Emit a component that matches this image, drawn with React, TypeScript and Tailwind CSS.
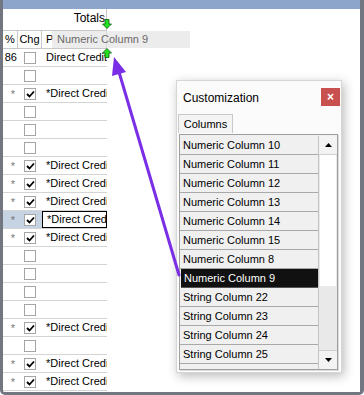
import React from 'react';

type Row = { pct?: string; star?: boolean; checked?: boolean; text?: string; selected?: boolean };

const rows: Row[] = [
  { pct: '86', text: 'Direct Credit' },
  {},
  { star: true, checked: true, text: '*Direct Credit' },
  {},
  {},
  {},
  { star: true, checked: true, text: '*Direct Credit' },
  { star: true, checked: true, text: '*Direct Credit' },
  { star: true, checked: true, text: '*Direct Credit' },
  { star: true, checked: true, text: '*Direct Credit', selected: true },
  { star: true, checked: true, text: '*Direct Credit' },
  {},
  {},
  {},
  {},
  { star: true, checked: true, text: '*Direct Credit' },
  {},
  { star: true, checked: true, text: '*Direct Credit' },
  { star: true, checked: true, text: '*Direct Credit' },
];

const columns = [
  'Numeric Column 10',
  'Numeric Column 11',
  'Numeric Column 12',
  'Numeric Column 13',
  'Numeric Column 14',
  'Numeric Column 15',
  'Numeric Column 8',
  'Numeric Column 9',
  'String Column 22',
  'String Column 23',
  'String Column 24',
  'String Column 25',
];

const Checkbox: React.FC<{ checked?: boolean }> = ({ checked }) => (
  <div className="w-[12px] h-[12px] border border-[#a5a5a5] bg-white flex items-center justify-center">
    {checked && (
      <svg width="9" height="8" viewBox="0 0 9 8">
        <path d="M1 4 L3.5 6.5 L8 1.5" fill="none" stroke="#000" strokeWidth="1.8" />
      </svg>
    )}
  </div>
);

const GreenArrow: React.FC<{ up?: boolean; className: string }> = ({ up, className }) => (
  <svg className={`absolute ${className}`} width="10" height="10" viewBox="0 0 10 10">
    <path
      d={up ? 'M5 0.5 L9.5 5 L7 5 L7 9.5 L3 9.5 L3 5 L0.5 5 Z' : 'M5 9.5 L9.5 5 L7 5 L7 0.5 L3 0.5 L3 5 L0.5 5 Z'}
      fill="#22e022"
      stroke="#0b5d0b"
      strokeWidth="0.8"
    />
  </svg>
);

export default function App() {
  return (
    <div className="relative w-[364px] h-[395px] bg-white overflow-hidden text-[11px] text-black" style={{ fontFamily: '"Liberation Sans", Arial, sans-serif' }}>
      {/* screenshot frame */}
      <div className="h-full flex flex-col border-l-[3px] border-r-[4px] border-b-[3px] border-[#717680] rounded-b-[5px] overflow-hidden">
        <div className="h-[9px] bg-[#8da4cb] shrink-0" />
        <div className="flex-1 flex bg-white">
          {/* grid */}
          <div className="w-[104px] flex flex-col">
            <div className="h-[22px] border-b border-r border-[#c8c8c8] flex items-end justify-end pr-[1px] pb-[3px] text-[12px]">Totals</div>
            <div className="h-[18px] border-b border-r border-[#c8c8c8] flex items-center">
              <div className="w-[15px] h-full border-r border-[#c8c8c8] flex items-center justify-center">%</div>
              <div className="w-[24px] h-full border-r border-[#c8c8c8] flex items-center justify-center">Chg</div>
              <div className="pl-[4px]">P</div>
            </div>
            {rows.map((r, i) => (
              <div key={i} className="h-[18px] border-b border-[#d4d4d4] flex items-center">
                <div className={`w-[15px] h-full flex items-center justify-end pr-[2px] overflow-hidden ${r.selected ? 'bg-[#c5d3e2]' : ''}`}>
                  {r.pct && <span className="text-[11px] -mr-[1px]">{r.pct}</span>}
                  {r.star && <span className="text-[11px] leading-none text-[#777] mt-[1px] mr-[1px]">*</span>}
                </div>
                <div className={`w-[24px] h-full flex items-center pl-[6px] ${r.selected ? 'bg-[#c5d3e2]' : ''}`}>
                  <Checkbox checked={r.checked} />
                </div>
                <div className={`flex-1 h-full flex items-center pl-[4px] overflow-hidden whitespace-nowrap ${r.selected ? 'border border-black pl-[3px]' : ''}`}>
                  {r.text}
                </div>
              </div>
            ))}
          </div>
          <div className="flex-1 bg-white" />
        </div>
      </div>

      {/* drag ghost */}
      <div className="absolute left-[52px] top-[31px] w-[138px] h-[17px] bg-[#e4e4e4]/70 flex items-center pl-[5px] text-[11px] text-[#6a6a6a]">
        Numeric Column 9
      </div>
      <GreenArrow className="left-[102px] top-[19px]" />
      <GreenArrow up className="left-[102px] top-[48px]" />

      {/* customization dialog */}
      <div className="absolute left-[176px] top-[80px] w-[166px] h-[293px] bg-[#fbfbfb] border border-[#d6d6d6] shadow-[2px_3px_10px_rgba(0,0,0,0.28)] flex flex-col">
        <div className="h-[33px] flex items-start justify-between shrink-0">
          <div className="pl-[6px] pt-[8px] text-[12px]">Customization</div>
          <div className="mt-[7px] mr-[1px] w-[19px] h-[18px] bg-[#c85150] flex items-center justify-center text-white text-[12px] font-bold leading-none">×</div>
        </div>
        <div className="ml-[1px] w-[55px] h-[19px] border border-b-0 border-[#c9c9c9] bg-[#f4f4f4] flex items-center justify-center text-[11px] shrink-0">
          Columns
        </div>
        <div className="ml-[2px] mt-[1px] w-[159px] h-[236px] border border-[#9f9f9f] flex bg-[#f0f0f0] shadow-[1px_1px_0_#dcdcdc] pt-[1px]">
          <div className="flex-1 flex flex-col border-r border-[#c4c4c4]">
            {columns.map((c) => (
              <div
                key={c}
                className={`h-[19px] shrink-0 border-b flex items-center pl-[3px] whitespace-nowrap ${
                  c === 'Numeric Column 9' ? 'bg-[#111] text-white border-[#555] ml-[1px]' : 'border-[#a8a8a8] bg-[#f0f0f0]'
                }`}
              >
                {c}
              </div>
            ))}
          </div>
          <div className="w-[18px] flex flex-col bg-[#e9e9e9]">
            <div className="h-[19px] border-b border-[#d0d0d0] bg-[#f3f3f3] flex items-center justify-center">
              <svg width="7" height="4" viewBox="0 0 7 4"><path d="M3.5 0 L7 4 L0 4 Z" fill="#000" /></svg>
            </div>
            <div className="h-[131px] bg-white mx-[1px]" />
            <div className="flex-1" />
            <div className="h-[19px] border-t border-[#d0d0d0] bg-[#f3f3f3] flex items-center justify-center">
              <svg width="7" height="4" viewBox="0 0 7 4"><path d="M0 0 L7 0 L3.5 4 Z" fill="#000" /></svg>
            </div>
          </div>
        </div>
      </div>

      {/* annotation arrow */}
      <svg className="absolute inset-0 pointer-events-none" width="364" height="395" viewBox="0 0 364 395">
        <line x1="179" y1="275" x2="119" y2="72" stroke="#7a2fe6" strokeWidth="3" strokeLinecap="round" />
        <polygon points="114,57 126,72 112,76" fill="#7a2fe6" />
      </svg>
    </div>
  );
}
